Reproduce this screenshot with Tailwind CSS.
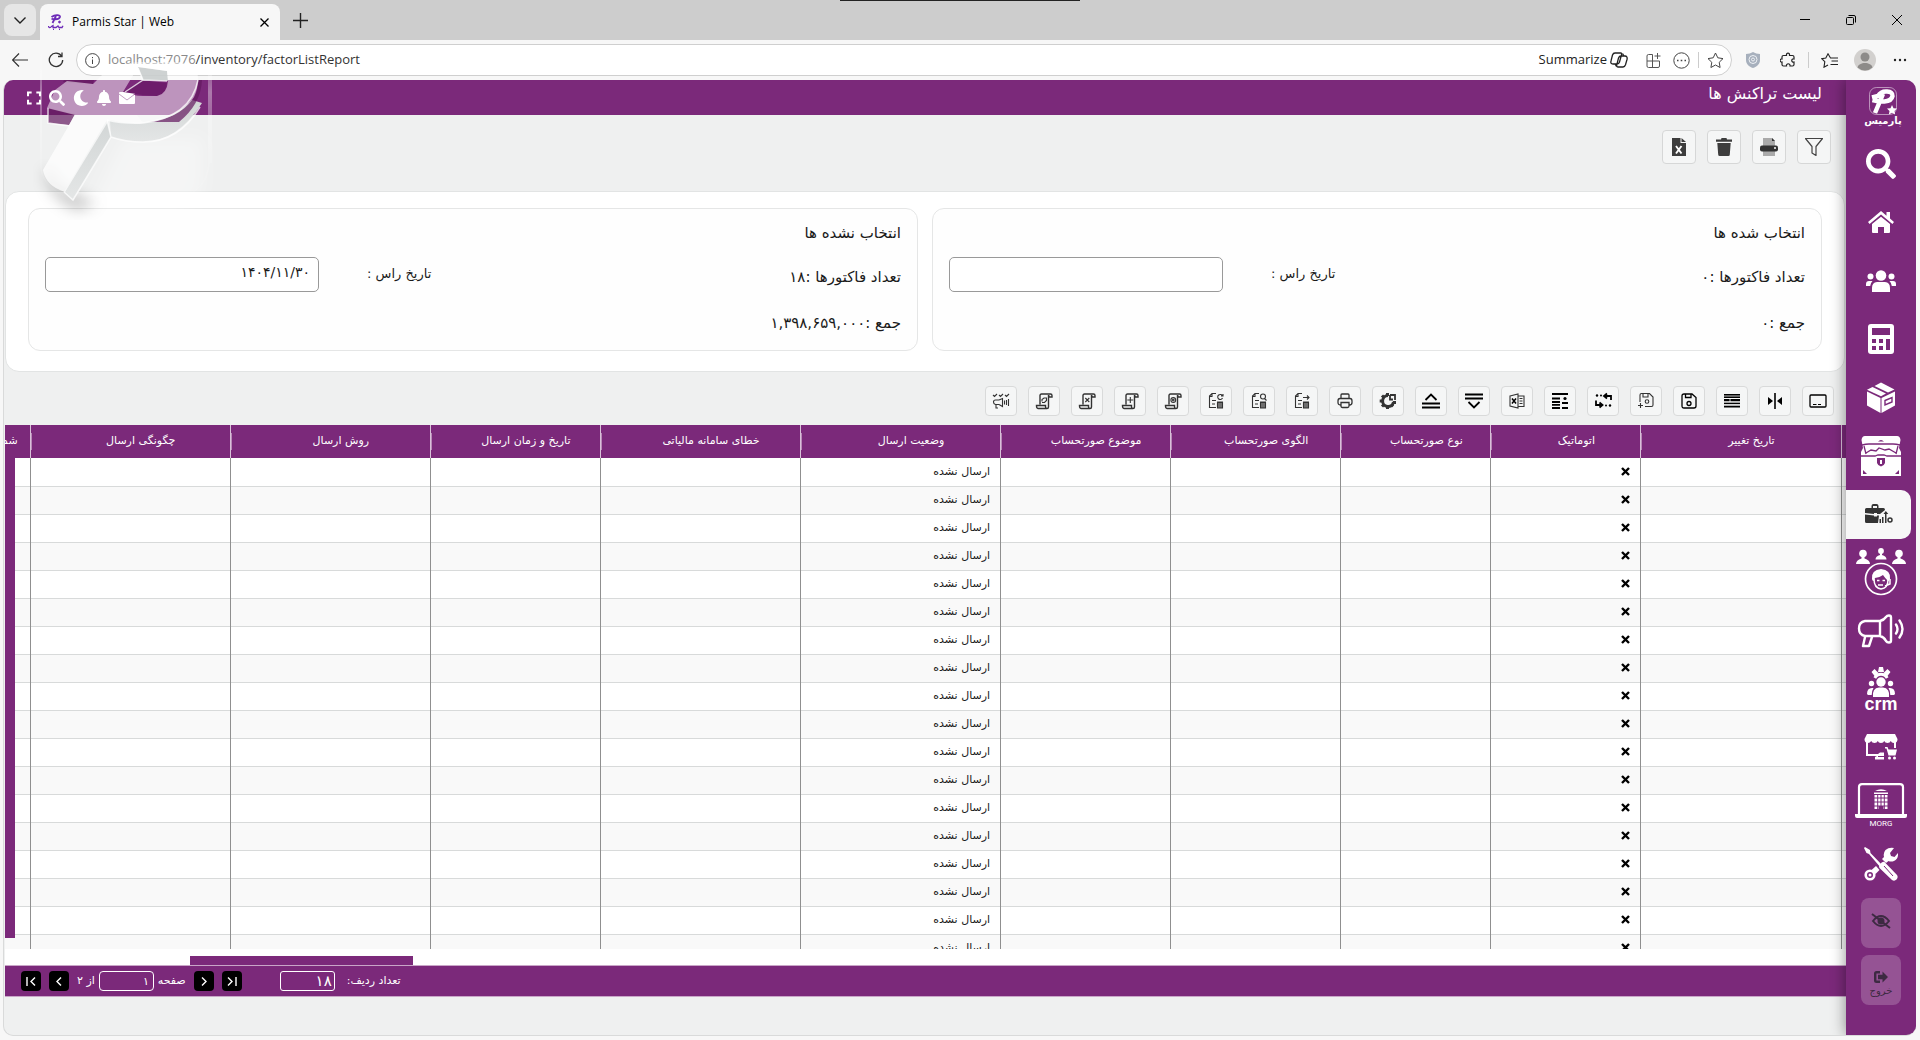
<!DOCTYPE html>
<html lang="fa">
<head>
<meta charset="utf-8">
<title>Parmis Star | Web</title>
<script src="https://cdn.jsdelivr.net/npm/@tailwindcss/browser@4"></script>
</head>
<body class="relative flex h-screen flex-col overflow-hidden bg-[#f7f7f7] font-['DejaVu_Sans',sans-serif] text-[#1a1a1a]">

<!-- Browser tab strip -->
<header class="flex h-10 shrink-0 items-end bg-[#cdcdcd] font-['Open_Sans',sans-serif]">
  <button aria-label="Tab actions" class="mb-1 ml-1 flex h-8 w-8 items-center justify-center rounded-lg bg-[#e6e6e6]">
    <svg class="h-3 w-3" viewBox="0 0 12 12" fill="none" stroke="#222" stroke-width="1.4"><path d="M0.5 3.5 6 9l5.5-5.500"/></svg>
  </button>
  <div class="ml-1 flex h-9 w-60 items-center rounded-t-lg bg-[#f7f7f7] pr-2 pl-2">
    <svg class="h-4 w-4" viewBox="0 0 16 16" fill="none" stroke="#6d2bb8"><path stroke-width="1.800" d="M3.500 3c4-3 9-2 8.500 0-.8 2.200-5 2.500-8.500 1.800M8 2 4.500 9"/><circle cx="11.500" cy="8" r=".9" fill="#6d2bb8"/><path stroke-width="1.300" d="M.5 12c0 2 2 2 3 .5l1.500-.8v1.800h3l2-1.500 1 1.500h3l1-1.800M5 15.300h1m5 0h1"/></svg>
    <span class="ml-2 flex-1 text-xs text-black">Parmis Star | Web</span>
    <button aria-label="Close tab" class="flex h-4 w-4 items-center justify-center"><svg class="h-[9px] w-[9px]" viewBox="0 0 9 9" stroke="#000" stroke-width="1.3"><path d="m.5.5 8 8m0-8-8 8"/></svg></button>
  </div>
  <button aria-label="New tab" class="mb-3 ml-3 flex h-4 w-4 items-center justify-center"><svg class="h-[15px] w-[15px]" viewBox="0 0 15 15" stroke="#222" stroke-width="1.400"><path d="M7.500 0v15M0 7.500h15"/></svg></button>
  <div class="flex h-10 flex-1 items-center justify-end gap-9 pr-[18px]">
    <button aria-label="Minimize"><svg class="h-[10px] w-[10px]" viewBox="0 0 10 10" stroke="#000"><path d="M0 4.500h10"/></svg></button>
    <button aria-label="Restore"><svg class="h-[10px] w-[10px]" viewBox="0 0 10 10" fill="none" stroke="#000"><rect x=".5" y="2.500" width="7" height="7" rx="1"/><path d="M2.500.5h5.500a1.500 1.500 0 0 1 1.500 1.500v5.500"/></svg></button>
    <button aria-label="Close"><svg class="h-[10px] w-[10px]" viewBox="0 0 10 10" stroke="#000"><path d="m0 0 10 10M10 0 0 10"/></svg></button>
  </div>
</header>
<div class="absolute top-0 left-1/2 h-px w-60 -translate-x-1/2 bg-[#222]"></div>

<!-- Address bar -->
<div class="flex h-10 shrink-0 items-center gap-3 bg-[#f7f7f7] pr-3 pl-3 font-['Open_Sans',sans-serif]">
  <button aria-label="Back" class="mr-2"><svg class="h-4 w-4" viewBox="0 0 16 16" fill="none" stroke="#333" stroke-width="1.200"><path d="M16 8H.5M7 1.500.5 8 7 14.500"/></svg></button>
  <button aria-label="Refresh"><svg class="h-4 w-4" viewBox="0 0 16 16" fill="none" stroke="#333" stroke-width="1.300"><path d="M13.500 4A6.700 6.700 0 1 0 14.700 8M14 .5V4.500h-4"/></svg></button>
  <div class="flex h-8 flex-1 items-center rounded-full border border-[#cfcfcf] bg-white pr-[7px] pl-2">
    <svg class="h-[15px] w-[15px]" viewBox="0 0 15 15" fill="none" stroke="#444"><circle cx="7.500" cy="7.500" r="6.900"/><path d="M7.500 6.500v4.500M7.500 4v1.200"/></svg>
    <div role="textbox" aria-label="Address" class="ml-2 flex-1 text-[13px] text-[#333]"><span class="text-[#8a8a8a]">localhost:7076</span>/inventory/factorListReport</div>
    <span class="text-[13px] text-[#222]">Summarize</span>
    <svg class="ml-[3px] h-[18px] w-[18px]" viewBox="0 0 18 18" fill="none" stroke="#222" stroke-width="1.300"><path d="M5 2h5.500c1.500 0 1.200 1.200.8 2.500L9.500 11c-.4 1.500-1 2-2.500 2H3c-2 0-2.500-1.200-2-3l1.500-6C3 2.600 3.700 2 5 2zM8 16h5c1.500 0 2-.8 2.500-2.200L17 8.500c.5-2-.2-3.500-2-3.500h-4C9.500 5 9 5.700 8.500 7L7 13c-.5 1.700-.5 3 1 3zM12.500 2.500 14 5M5 13l1.500 2.500"/></svg>
    <svg class="ml-[18px] h-[15px] w-[15px]" viewBox="0 0 15 15" fill="none" stroke="#555"><path d="M6.500 1.500h-4a1.500 1.500 0 0 0-1.500 1.500v10a1.500 1.500 0 0 0 1.500 1.500h9.500a1.500 1.500 0 0 0 1.500-1.500V8H1M6.500 1.500v13M11.500 0v6M8.500 3h6"/></svg>
    <svg class="ml-3 h-[17px] w-[17px]" viewBox="0 0 17 17" fill="none" stroke="#444"><circle cx="8.500" cy="8.500" r="7.700"/><path stroke-width="1.600" d="M4 8.500h1.500m2.200 0h1.600m2.200 0H13"/></svg>
    <span class="mx-2 h-4 w-px bg-[#ccc]"></span>
    <button aria-label="Favourite"><svg class="h-[17px] w-[17px]" viewBox="0 0 17 17" fill="none" stroke="#444" stroke-linejoin="round"><path d="m8.500 1 2.300 4.800 5.200.8-3.800 3.700.9 5.200-4.600-2.500-4.600 2.500.9-5.200L1 6.600l5.200-.8z"/></svg></button>
  </div>
  <svg class="ml-0.5 h-4 w-[14px]" viewBox="0 0 14 16"><path d="M7 0c2 1.300 4.500 2 7 2v6c0 4-3 6.800-7 8-4-1.200-7-4-7-8V2c2.500 0 5-.7 7-2z" fill="#a7b0bd"/><circle cx="7" cy="7.500" r="4" fill="none" stroke="#eef1f5"/><circle cx="7" cy="7.500" r="1.500" fill="none" stroke="#eef1f5"/></svg>
  <svg class="ml-2 h-4 w-4" viewBox="0 0 16 16" fill="none" stroke="#222" stroke-width="1.200"><path d="M3.500 3.500H6.500C6 .2 10 .2 9.500 3.500h3c1 0 1.500.5 1.500 1.500v2c-3-.5-3 3.500 0 3v2.500c0 1-.5 1.500-1.500 1.500H10c.5-3-4-3-3.500 0H3.500c-1 0-1.500-.5-1.500-1.500V10C-.5 10.500-.5 6.500 2 7V5c0-1 .5-1.500 1.500-1.500z"/></svg>
  <span class="h-4 w-px bg-[#ccc]"></span>
  <svg class="h-[15px] w-[17px]" viewBox="0 0 17 15" fill="none" stroke="#222" stroke-width="1.100"><path d="M13 5H9.500L7 .8 4.800 5 .8 5.700l3 3-.8 5.500 4-2.200M10.500 8H17M9.500 11.500H17M13 5h4"/></svg>
  <svg class="ml-1 h-[22px] w-[22px]" viewBox="0 0 22 22"><circle cx="11" cy="11" r="11" fill="#d2d0ce"/><circle cx="11" cy="8" r="4.500" fill="#8d8b89"/><path d="M3.500 18.500c1-6 14-6 15 0a11 11 0 0 1-15 0z" fill="#8d8b89"/></svg>
  <button aria-label="Settings and more" class="ml-1 w-4 shrink-0"><svg class="h-4 w-4" viewBox="0 0 16 16" fill="#222"><circle cx="3" cy="8" r="1.200"/><circle cx="8" cy="8" r="1.200"/><circle cx="13" cy="8" r="1.200"/></svg></button>
</div>

<!-- Application -->
<div dir="rtl" class="mr-1 mb-1 ml-[3px] flex min-h-0 flex-1 overflow-hidden rounded-[10px] border-b border-l border-[#d9dada] bg-[#eff0f0]">

  <aside class="relative z-10 flex w-[70px] shrink-0 flex-col bg-[#7b297a] text-white shadow-[0_0_14px_rgba(0,0,0,0.45)]">
    <a href="#" class="flex h-[55px] flex-col items-center pt-[7px] pl-1" aria-label="پارمیس">
      <svg class="h-7 w-7" viewBox="0 0 28 28" fill="none" stroke="#fff"><rect x=".5" y=".5" width="27" height="27" rx="7" stroke-width=".5"/><path stroke-width="4.500" d="M3 10.500l6-1.500q3-5 9-4.500 6 .5 5.500 4.500-1 5-8 5.500-5 .5-12-1.500M14 7 6 26"/><path fill="#fff" stroke="none" d="m23 18 1.500 3.200 3.500.4-2.500 2.400.6 3.500-3.100-1.700-3.100 1.700.6-3.500-2.500-2.400 3.500-.4z"/></svg>
      <span class="text-[10px] leading-3 font-bold">پارمیس</span>
    </a>
    <nav class="flex min-h-0 flex-1 flex-col">
      <a href="#" aria-label="جستجو" class="flex flex-1 items-center justify-center"><svg class="h-[30px] w-[30px]" viewBox="0 0 512 512" fill="#fff"><path d="M505 442.700L405.300 343c-4.500-4.500-10.600-7-17-7H372c27.600-35.300 44-79.700 44-128C416 93.100 322.900 0 208 0S0 93.100 0 208s93.100 208 208 208c48.300 0 92.700-16.400 128-44v16.300c0 6.400 2.500 12.500 7 17l99.700 99.700c9.400 9.400 24.600 9.400 33.900 0l28.300-28.300c9.400-9.400 9.400-24.600.1-34zM208 336c-70.700 0-128-57.200-128-128 0-70.700 57.200-128 128-128 70.700 0 128 57.200 128 128 0 70.700-57.200 128-128 128z"/></svg></a>
      <a href="#" aria-label="خانه" class="flex flex-1 items-center justify-center"><svg class="h-[22px] w-[26px]" viewBox="0 0 26 22" fill="#fff"><path d="M13 5.800 4 13V21q0 1 1 1h5v-6h6v6h5q1 0 1-1v-8z"/><path d="M13 0 0 11l1.600 2L13 3.600 24.400 13l1.600-2-4-3.400V1h-3.500v3.700z"/></svg></a>
      <a href="#" aria-label="اشخاص" class="flex flex-1 items-center justify-center"><svg class="h-[22px] w-[30px]" viewBox="0 0 30 22" fill="#fff"><circle cx="15" cy="5.500" r="5.300"/><circle cx="4.500" cy="6.500" r="3"/><circle cx="25.500" cy="6.500" r="3"/><path d="M6 22v-4q0-5.500 5-6h8q5 .5 5 6v4zM0 16v-2q0-3 3-3h3.500Q4.500 13 4.200 16zM30 16v-2q0-3-3-3h-3.500q2 2 2.300 5z"/></svg></a>
      <a href="#" aria-label="حسابداری" class="flex flex-1 items-center justify-center"><svg class="h-[30px] w-[26px]" viewBox="0 0 26 30"><rect width="26" height="30" rx="3" fill="#fff"/><path fill="#7b297a" d="M4 4h18v7H4zM4 15h4v4H4zm7 0h4v4h-4zm-7 7h4v4H4zm7 0h4v4h-4zm7-7h4v11h-4z"/></svg></a>
      <a href="#" aria-label="انبار" class="flex flex-1 items-center justify-center"><svg class="h-[31px] w-[28px]" viewBox="0 0 28 31" fill="#fff"><path d="M0 9.500 13.500 16v15L0 23.500zM28 9.500 14.500 16v15L28 23.500zM0 7.800 5.500 5 19 11.500l-5 2.700zM7.500 4 14 .5l13.500 7L21 10.500z"/><path d="m18 18.500 7-3v4.500l-7 3z" stroke="#7b297a" stroke-width="1.400"/></svg></a>
      <a href="#" aria-label="خزانه" class="flex flex-1 items-center justify-center"><svg class="h-10 w-10" viewBox="0 0 40 40"><path fill="#fff" d="M4 0h32q3 0 3.500 4L38 12l2 4v24H0V16l2-4L.5 4Q1 0 4 0z"/><path fill="none" stroke="#7b297a" stroke-width="1.300" d="M1 9q4-1 7-1h24q3 0 7 1M3 10l2 8M37 10l-2 8M5 17l5-3 5 1 3-3 6 2 4-1 7 4M0 20h14l3-1h6l3 1h14"/><path fill="#7b297a" d="M17 5.500q3-3 6 0zM16 22h8v5q-1 3-4 3.500-3-.5-4-3.500zM2 34l4 4H2zM38 34l-4 4h4z"/><path fill="#fff" d="M19 24h2v4h-2z"/></svg></a>
      <a href="#" aria-label="فاکتورها" aria-current="page" class="flex flex-1 items-center justify-end"><span class="flex h-[49px] w-[65px] items-center justify-center rounded-r-[10px] bg-[#f7f7f7]"><svg class="h-5 w-7" viewBox="0 0 28 20" fill="#333"><path d="M1.500 4h5V2q0-2 2-2h3q2 0 2 2v2h5q1.500 0 1.500 2L15 10h-3V9H9v1L0 9V5.500Q0 4 1.500 4zM8 4h4V2H8z"/><path d="m0 10.500 9 1v1h3v-1h2l-1 7.500H1.500Q0 19 0 17.500zM14.500 15H16v4h-1.500zM17 13h1.500v6H17zM20 9h1.500v10H20zM18.500 10l2.300-3 2.500 3z"/><circle cx="25" cy="16" r="2" fill="none" stroke="#333" stroke-width="1.500"/></svg></span></a>
      <a href="#" aria-label="پشتیبانی" class="flex flex-1 items-center justify-center"><svg class="h-12 w-[50px]" viewBox="0 0 50 48" fill="#fff"><circle cx="7" cy="5.500" r="3.800"/><path d="M0 16q0-4 5.500-5.500V8h3v2.500q5.500 1.500 5.500 5.500z"/><circle cx="25" cy="3" r="2.900"/><path d="M19.500 11.500q0-3.500 4.500-4.500V5h2v2q4.500 1 4.500 4.500z"/><circle cx="43" cy="5.500" r="3.800"/><path d="M36 16q0-4 5.500-5.500V8h3v2.500q5.500 1.500 5.500 5.500z"/><circle cx="25" cy="31" r="15.500" fill="none" stroke="#fff" stroke-width="1.700"/><path d="M16 31q-1-9 9-10 10 1 9 10-1 2-2 2-3-3-5-6-4 3-8 3l-1 3q-2 0-2-2z"/><path fill="none" stroke="#fff" stroke-width="1.500" d="M18 31q0 9 7 10 7-1 7-9M34 31v5l-5 2"/><path stroke="#fff" stroke-width="1.500" d="M21 32.500h2.500m3 0H29M22 37h5"/></svg></a>
      <a href="#" aria-label="اطلاع رسانی" class="flex flex-1 items-center justify-center"><svg class="h-[34px] w-12" viewBox="0 0 48 34" fill="none" stroke="#fff" stroke-width="2.600" stroke-linejoin="round" stroke-linecap="round"><path d="M23 7H8Q2 8 2 14.500T8 22h15M23 7v15M23 7q4-1 6-4 1-1.500 3-1.500 2 0 2 2v23q0 2-2 2t-3-1.500q-2-4-6-5M8 23 6 32h6l3-9M39 10.500q3 4.500 0 9M42.500 6.500q6 8.500 0 17" stroke-width="2.400"/></svg></a>
      <a href="#" aria-label="crm" class="flex flex-1 flex-col items-center justify-center"><svg class="h-[30px] w-7" viewBox="0 0 28 30" fill="#fff"><path fill="none" stroke="#fff" stroke-width="3" d="M7.800 11a7 7 0 0 1 12.400 0"/><path d="M12 0h4l1 5h-6zM4.500 5 7.500 2l4 4-3.500 3.500zM23.500 5l-3-3-4 4 3.500 3.500z"/><circle cx="14" cy="15" r="4.700"/><circle cx="4.500" cy="16.500" r="2.700"/><circle cx="23.500" cy="16.500" r="2.700"/><path d="M6 30q-1-9 6-9.500h4q7 .5 6 9.500zM0 27q0-6 5-6h1.500Q5 23 4.700 28H1zM28 27q0-6-5-6h-1.500q1.500 2 1.800 7H27z"/></svg><span dir="ltr" class="font-['Liberation_Sans',sans-serif] text-[18px] leading-[14px] font-bold">crm</span></a>
      <a href="#" aria-label="فروشگاه" class="flex flex-1 items-center justify-center"><svg class="h-[26px] w-[34px]" viewBox="0 0 34 26" fill="#fff"><path d="M3 0h28l2.500 5q0 4-3.500 4-2.500 0-3.200-2Q26 9 23.500 9t-3.300-2Q19.500 9 17 9t-3.200-2Q13 9 10.500 9T7.200 7Q6 9 4 9 .5 9 .5 5z"/><path d="M2 8h2v12h10l2-1.500h4V22h-6v1h6v2.500h-9V23l2-1H2zM30 8h2v6h-2zM21 13h2.500l1 2.500H33l-1.500 6h-7l-2-7H21z"/><circle cx="25.500" cy="24" r="1.500"/><circle cx="30.500" cy="24" r="1.500"/></svg></a>
      <a href="#" aria-label="MORG" class="flex flex-1 flex-col items-center justify-center"><svg class="h-[35px] w-[52px]" viewBox="0 0 52 35" fill="#fff"><path fill="none" stroke="#fff" stroke-width="2.200" d="M4 31V4Q4 1.200 7 1.200h38Q48 1.200 48 4v27"/><path d="M0 31h52v2q0 2-2 2H2q-2 0-2-2zM20 8q6-3.500 12 0zM19 9.500h14v1.500H19zM19.500 12h13v14h-4v-3h-5v3h-4z"/><path stroke="#7b297a" stroke-width="1" d="M19 15h14M19 19h14M19 23h14M22.700 12v14M26 12v11M29.300 12v14"/></svg><span dir="ltr" class="mt-px font-['Roboto',sans-serif] text-[8px] leading-[9px]">MORG</span></a>
      <a href="#" aria-label="ابزار" class="flex flex-1 items-center justify-center"><svg class="h-[34px] w-[34px]" viewBox="0 0 34 34" fill="#fff"><path d="M0 1 1 0l5 3 .5 3L19 19l-2 2L5 7 2.500 6z"/><path d="M16 17.500q2-3.500 4.500-2.500L33 28q1.500 2.500-.5 4.500t-4.500.5L15.500 21q-1-2 .5-3.500z"/><path d="M30 1l-4 5 1 3 3.500 1L34 6q.5 6-4 8-3 1-5.500 0L22 16l-4-4 2-2q-1-4 1.500-7Q25 0 30 1zM12 19l3.500 4-4 4-4-4z"/><circle cx="6" cy="28" r="4.300" fill="none" stroke="#fff" stroke-width="2.600"/><circle cx="6" cy="28" r="1.500"/><path stroke="#7b297a" stroke-width="1" d="m20 19 9 10"/></svg></a>
    </nav>
    <div class="flex h-[142px] shrink-0 flex-col items-center gap-[7px] pt-[5px]">
      <button aria-label="پنهان کردن" class="flex h-[50px] w-10 items-center justify-center rounded-lg bg-white/20"><svg class="mb-1 h-4 w-5" viewBox="0 0 20 16" fill="none" stroke="#3d2a42" stroke-width="2"><path d="M2 8q8-10 16 0-8 10-16 0z"/><circle cx="10" cy="8" r="2.500" fill="#3d2a42"/><path d="m1 1 18 14"/></svg></button>
      <button class="flex h-[50px] w-10 flex-col items-center justify-end rounded-lg bg-white/20 pb-1.5 text-[10px] leading-4 text-[#3d2a42]"><svg class="h-3 w-[14px]" viewBox="0 0 14 12" fill="none" stroke="#3d2a42" stroke-width="2.400"><path d="M6 1.200H2.500Q1.200 1.200 1.200 2.500v7q0 1.300 1.300 1.300H6"/><path fill="#3d2a42" stroke="none" d="M4 3.800h4.500V.5L14 6l-5.500 5.500V8.200H4z"/></svg>خروج</button>
    </div>
  </aside>

  <main class="flex min-w-0 flex-1 flex-col">
    <div class="flex h-[35px] shrink-0 justify-between bg-[#7b297a] pr-6 pl-[23px]">
      <h1 class="pt-0.5 text-base leading-6 font-medium text-white">لیست تراکنش ها</h1>
      <div dir="ltr" class="flex items-center gap-2">
        <button aria-label="تمام صفحه"><svg class="h-[14px] w-[14px]" viewBox="0 0 15 14" fill="none" stroke="#fff" stroke-width="2.200"><path d="M1.100 5V1.100H5M10 1.100h3.900V5M13.900 9v3.900H10M5 12.900H1.100V9"/></svg></button>
        <button aria-label="جستجو"><svg class="h-4 w-4" viewBox="0 0 512 512" fill="#fff"><path d="M505 442.700L405.300 343c-4.500-4.500-10.600-7-17-7H372c27.600-35.300 44-79.700 44-128C416 93.100 322.900 0 208 0S0 93.100 0 208s93.100 208 208 208c48.300 0 92.700-16.400 128-44v16.300c0 6.400 2.500 12.500 7 17l99.700 99.700c9.400 9.400 24.600 9.400 33.900 0l28.300-28.300c9.400-9.400 9.400-24.600.1-34zM208 336c-70.700 0-128-57.200-128-128 0-70.700 57.200-128 128-128 70.700 0 128 57.200 128 128 0 70.700-57.200 128-128 128z"/></svg></button>
        <button aria-label="حالت شب"><svg class="h-4 w-4" viewBox="0 0 512 512" fill="#fff"><path d="M283.200 512c79 0 151-36 198.900-94.800 7-8.700-.6-21.400-11.600-19.300-124.200 23.600-238.300-71.600-238.300-197 0-72.200 38.700-138.600 101.500-174.400 9.700-5.500 7.300-20.200-3.700-22.200A258 258 0 0 0 283.200 0c-141.300 0-256 114.500-256 256 0 141.300 114.500 256 256 256z"/></svg></button>
        <button aria-label="اعلان ها"><svg class="h-4 w-[14px]" viewBox="0 0 448 512" fill="#fff"><path d="M224 512c35.300 0 64-28.600 64-64H160c0 35.400 28.700 64 64 64zm215.400-149.700c-19.300-20.800-55.500-52-55.500-154.300 0-77.700-54.500-139.900-127.900-155.200V32c0-17.700-14.300-32-32-32s-32 14.300-32 32v20.800C118.600 68.100 64.100 130.300 64.100 208c0 102.300-36.200 133.500-55.500 154.300-6 6.400-8.700 14.200-8.600 21.700.1 16.400 13 32 32.100 32h383.800c19.100 0 32-15.600 32.100-32 0-7.500-2.600-15.300-8.600-21.700z"/></svg></button>
        <button aria-label="پیام ها"><svg class="h-3 w-4" viewBox="0 0 16 12" fill="#fff"><rect width="16" height="12" rx="1"/><path fill="none" stroke="#7b297a" stroke-width=".9" d="m0 2 8 6 8-6"/></svg></button>
      </div>
    </div>

    <div class="flex h-[76px] shrink-0 gap-[11px] pt-[15px] pr-[15px]">
      <button aria-label="فیلتر" class="flex h-[34px] w-[34px] items-center justify-center rounded border border-[#d6d7d7] bg-[#f5f6f6]"><svg class="h-[18px] w-[18px]" viewBox="0 0 18 18" fill="none" stroke="#444" stroke-linejoin="round" stroke-width="1.200"><path d="M.5.5h17L11 8.500v9l-4-2.500V8.500z"/></svg></button>
      <button aria-label="چاپ" class="flex h-[34px] w-[34px] items-center justify-center rounded border border-[#d6d7d7] bg-[#f5f6f6]"><svg class="h-[18px] w-[18px]" viewBox="0 0 18 18"><path fill="#aaa" d="M3 0h9l3 3v15H3z"/><path fill="#333" d="M12 0l3 3h-3z"/><rect y="7.500" width="18" height="6" rx="2" fill="#333"/><circle cx="15" cy="10" r="1" fill="#fff"/></svg></button>
      <button aria-label="حذف" class="flex h-[34px] w-[34px] items-center justify-center rounded border border-[#d6d7d7] bg-[#f5f6f6]"><svg class="h-[18px] w-4" viewBox="0 0 16 18" fill="#3d3d3d"><path d="M5.500 0h5L11 1.500h5v2.300H0V1.500h5zM1.300 5h13.400l-.9 11.500q0 1.500-1.500 1.500H3.700q-1.500 0-1.500-1.500z"/></svg></button>
      <button aria-label="خروجی اکسل" class="flex h-[34px] w-[34px] items-center justify-center rounded border border-[#d6d7d7] bg-[#f5f6f6]"><svg class="h-[18px] w-[14px]" viewBox="0 0 14 18"><path fill="#3d3d3d" d="M0 0h8.500v5H14v13H0zM9.500 0 14 4H9.500z"/><path stroke="#fff" stroke-width="1.900" d="m4 8 5.500 7.500m0-7.500L4 15.500"/></svg></button>
    </div>

    <section class="mr-px ml-px grid h-[181px] shrink-0 grid-cols-2 gap-[14px] rounded-[14px] border border-[#e2e4e4] bg-white px-[22px] pt-4 pb-5 text-[15px]">
      <div class="flex justify-between rounded-xl border border-[#e5e6e6] bg-[#fefefe] px-4 pt-3">
        <div class="flex flex-col">
          <h2 class="leading-6">انتخاب شده ها</h2>
          <p class="mt-5 leading-6">تعداد فاکتورها :۰</p>
          <p class="mt-[22px] leading-6">جمع :۰</p>
        </div>
        <div class="mt-[35px] flex h-9 items-center gap-12">
          <label for="r1" class="text-[13px]">تاریخ راس :</label>
          <input id="r1" class="h-[35px] w-[274px] rounded-[5px] border border-[#999] bg-white px-2 pb-1 text-sm">
        </div>
      </div>
      <div class="flex justify-between rounded-xl border border-[#e5e6e6] bg-[#fefefe] px-4 pt-3">
        <div class="flex flex-col">
          <h2 class="leading-6">انتخاب نشده ها</h2>
          <p class="mt-5 leading-6">تعداد فاکتورها :۱۸</p>
          <p class="mt-[22px] leading-6">جمع :۱,۳۹۸,۶۵۹,۰۰۰</p>
        </div>
        <div class="mt-[35px] flex h-9 items-center gap-12">
          <label for="r2" class="text-[13px]">تاریخ راس :</label>
          <input id="r2" value="۱۴۰۴/۱۱/۳۰" class="h-[35px] w-[274px] rounded-[5px] border border-[#999] bg-white px-2 pb-1 text-sm">
        </div>
      </div>
    </section>

    <div id="tools" class="flex h-[53px] shrink-0 items-center gap-[11px] pt-1 pr-3"></div>

    <!-- Grid -->
    <div class="relative ml-px min-h-0 flex-1 overflow-hidden bg-white">
      <table class="w-full table-fixed border-collapse">
        <colgroup id="cols"></colgroup>
        <thead><tr id="head" class="h-[33px] bg-[#7b297a] text-[11px] whitespace-nowrap text-white"></tr></thead>
        <tbody id="rows" class="text-[11px]"></tbody>
      </table>
      <div class="absolute top-[33px] bottom-[11px] left-0 w-2.5 bg-[#7b297a]"></div>
    </div>
    <div class="ml-px flex h-4 shrink-0 items-end bg-white" dir="ltr"><div class="ml-[185px] h-[9px] w-[223px] bg-[#7b297a]"></div></div>

    <footer class="ml-px flex h-8 shrink-0 items-center justify-end border-y border-[#c9a6c8] bg-[#7b297a] pl-4 text-[11px] text-white">
      <label for="count">تعداد ردیف:</label>
      <input id="count" value="۱۸" class="mr-3 h-5 w-[55px] rounded-[3px] border border-white px-0.5 text-[15px]">
      <div class="mr-[38px] flex items-center">
        <button aria-label="آخر" class="flex h-5 w-5 items-center justify-center rounded-sm bg-black"><svg class="h-[9px] w-[10px]" viewBox="0 0 10 9" fill="none" stroke="#fff" stroke-width="1.400"><path d="m1 .5 4 4-4 4M9 0v9"/></svg></button>
        <button aria-label="بعدی" class="mr-2 flex h-5 w-5 items-center justify-center rounded-sm bg-black"><svg class="h-[9px] w-[6px]" viewBox="0 0 6 9" fill="none" stroke="#fff" stroke-width="1.400"><path d="m1 .5 4 4-4 4"/></svg></button>
        <label for="pg" class="mr-2">صفحه</label>
        <input id="pg" value="۱" class="mr-1 h-5 w-[55px] rounded border border-white px-1">
        <span class="mr-1">از ۲</span>
        <button aria-label="قبلی" class="mr-2 flex h-5 w-5 items-center justify-center rounded-sm bg-black"><svg class="h-[9px] w-[6px]" viewBox="0 0 6 9" fill="none" stroke="#fff" stroke-width="1.400"><path d="m5 .5-4 4 4 4"/></svg></button>
        <button aria-label="اول" class="mr-2 flex h-5 w-5 items-center justify-center rounded-sm bg-black"><svg class="h-[9px] w-[10px]" viewBox="0 0 10 9" fill="none" stroke="#fff" stroke-width="1.400"><path d="M1 0v9M9 .5l-4 4 4 4"/></svg></button>
      </div>
    </footer>
    <div class="h-[38px] shrink-0"></div>
  </main>
</div>

<!-- Translucent floating logo -->
<svg class="pointer-events-none absolute top-7 left-7 h-52 w-52" viewBox="0 0 208 208" fill="none">
  <defs>
    <filter id="soft" x="-20%" y="-20%" width="140%" height="140%"><feGaussianBlur stdDeviation="7"/></filter>
    <filter id="glow" x="-20%" y="-20%" width="140%" height="140%"><feGaussianBlur stdDeviation="8"/></filter>
    <linearGradient id="edge" x1="0" y1="0" x2="0" y2="1"><stop offset="0" stop-color="#fff" stop-opacity="0"/><stop offset=".3" stop-color="#fff" stop-opacity=".5"/><stop offset="1" stop-color="#fff" stop-opacity="0"/></linearGradient>
    <linearGradient id="side" x1="0" y1="0" x2="0" y2="1"><stop offset="0" stop-color="#d2d6d6"/><stop offset="1" stop-color="#e4e6e6"/></linearGradient>
  </defs>
  <path filter="url(#soft)" fill="#000" fill-opacity=".2" d="M16 145q6 28 34 38l20-8-26-12Q26 160 22 140z"/>
  <path filter="url(#glow)" fill="#fff" fill-opacity=".35" d="M95 110h80v50q-10 20-30 22H60z"/>
  <path stroke="url(#edge)" stroke-width="1.500" d="M13 18v122q2 20 31 32M181 25v110q-2 30-34 36h-90M183 25v110"/>
  <path fill="url(#side)" d="M79 92l4 17-38 63-9-8z"/>
  <path fill="url(#side)" d="M82 92q16 4 33 3 32-5 49-23l10 3q-24 38-59 39-18 0-32-5z"/>
  <path fill="#64185f" fill-opacity=".7" d="M20 80l27 6-6 11-21-2zM36 52h30l-1 4-30-2zM164 72q7-9 6-20l4 0q-1 24-23 42h-30q30-4 43-22z"/>
  <path fill="#c9cdcd" fill-opacity=".9" d="m110 39 29 4 1 10-25-1z"/>
  <path fill="#6d1c6b" d="m114 52 25 3q-2 13-10 13l-14-1-20-3z"/>
  <path fill="#fff" fill-opacity=".5" fill-rule="evenodd" d="M39 53l26 3 10-10q18-12 38-12h40q18 4 17 18-1 14-6 20-17 19-49 23-18 1-34-3l-44 72Q18 158 15 142l32-55-28-7 8-18zM110 39 95 64q10 4 20 4h14q10-2 11-15l-1-10z"/>
  <path fill="#fff" fill-opacity=".45" d="M47 87h62l6 8q-17 1-34-3l-44 72Q18 158 15 142z"/>
  <path stroke="#fff" stroke-opacity=".75" stroke-width="1.500" d="M20 80v15l22 3M79 92l4 17-38 63-9-8M83 109q14 5 32 5 36 0 57-35M110 40l5 12-18 12M115 52l24 1M79 92q16 4 36 3 48-6 55-43"/>
</svg>

<script>
const dark = 'fill="none" stroke="#333" stroke-width="1.1"';
const bold = 'fill="none" stroke="#000" stroke-width="1.8"';
const scroll = '<path stroke-width="1.400" d="M4 11.500V2.500Q4 1 5.500 1h9Q16 1 16 2.500V4h-3V2.500M12.500 2v12q0 1.500-1.500 1.500H2Q.5 15.500.5 12.500H9.500V14q0 1.500 1.500 1.500"/>';
const doc = '<path d="M8 .5H4L1.500 3V14.500H8M4 1v2.500H1.500M4 7.500h4M4 11h3"/><path fill="#333" d="M9.500 9.500h5V15h-5zM9 9h6"/><path stroke="#fff" stroke-width=".6" d="M11 10v4.500m2-4.500v4.500"/>';
const tools = [
  ['نمایش', `<g ${dark}><rect x="0" y="2" width="16" height="12" rx="1" stroke="#000" stroke-width="1.300"/><path stroke="#000" d="M3 11.500h3.500m1.500 0h3"/></g>`],
  ['تنظیم عرض', '<path d="M8 0v16" stroke="#000" stroke-width="1.600"/><path d="M1 4l5 4-5 4zM15 4l-5 4 5 4z"/>'],
  ['ردیف ها', '<path d="M0 1h16v4H0zM0 9.500h16v1.800H0zM0 12.500h16v2H0zM0 6h16v2.500H0z"/><path stroke="#fff" stroke-width=".8" d="M0 5.500h16M0 8.900h16M0 12h16M6 5.500v3.500M0 3h16"/>'],
  ['ذخیره', `<g ${dark}><path stroke="#000" stroke-width="1.300" d="M3 1h8l4 3.500V13q0 2-2 2H3q-2 0-2-2V3q0-2 2-2zM4.500 1v3.500h5.500V1"/><circle cx="8" cy="10.500" r="2" stroke="#000" stroke-width="1.300"/></g>`],
  ['ذخیره جدید', `<g ${dark}><path d="M2 9V2q0-1.500 1.500-1.500h8L15 4v8q0 1.500-1.500 1.500H7M5 .5v3.500h5V.5M0 12.500h5M2.500 10v5"/><circle cx="9" cy="8.500" r="1.800"/></g>`],
  ['جابجایی', `<g ${bold}><path d="M9 3h7v4M7 12H1V7.500M12 .5 9 3l3 2.500M4.500 9.500 7.500 12l-3 2.500"/></g><circle cx="2" cy="2.500" r="1.200"/><circle cx="6" cy="2.500" r="1"/><circle cx="15" cy="12.500" r="1.200"/><circle cx="11" cy="12.500" r="1"/>`],
  ['ستون ها', '<path d="M0 0h16v2H0zM0 4.500h8v2H0zM0 8h8v2H0zM0 11h8v1.700H0zM0 14h8v2H0zM10 9h6v2h-6zM10 14h6v2h-6z"/><circle cx="13" cy="5.500" r="1.600"/>'],
  ['اکسل', `<g ${dark}><path d="M1 3l8-2v14l-8-2zM9 3h6v10.500H9M10.500 5.500h3m-3 2.500h3m-3 2.500h3"/><path stroke="#000" stroke-width="1.500" d="m3 5.500 4 5m0-5-4 5"/></g>`],
  ['باز کردن', `<g ${bold}><path d="M-1 1.500h18M-1 5.500h18M2.500 9 8 14.500 13.500 9"/></g>`],
  ['بستن', `<g ${bold}><path d="M-1 10.500h18M-1 14.500h18M2.500 7 8 1.500 13.500 7"/></g>`],
  ['تنظیمات', '<path fill="none" stroke="#333" stroke-width="3" d="M8 2.500a5.500 5.500 0 1 0 5.500 6.500"/><path stroke="#333" stroke-width="3" d="M7.500 0v3M7.500 13v3M-.3 8H3M2 2.500l2 2M2 13.500l2-2M11 11.500l2 2M13 9.500h3"/><path fill="none" stroke="#333" stroke-width="1.800" d="M10 2h5v5M10 2v4.500h3"/>'],
  ['چاپ', `<g ${dark}><path stroke-width="1.300" d="M4 5V2q0-1 1-1h6q1 0 1 1v3M3.500 12Q1 12 1 9.500V8q0-2.500 2-2.500h10q2 0 2 2.500v1.500q0 2.500-2.500 2.500M4 9.500h8V13q0 1.500-1.500 1.500h-5Q4 14.500 4 13z"/></g>`],
  ['سند ارسال', `<g ${dark}>${doc}<path d="M9 4.500h6M13 2.500l2 2-2 2"/></g>`],
  ['سند جستجو', `<g ${dark}>${doc}<circle cx="12" cy="3.500" r="2.500"/><path d="m13.500 5.500 2 2"/></g>`],
  ['سند تازه سازی', `<g ${dark}>${doc}<path d="M14.500 3a2.500 2.500 0 1 0 0 2M15 1v2h-2"/></g>`],
  ['صورتحساب', `<g ${dark}>${scroll}<circle cx="8.300" cy="7" r="2.400"/><circle cx="8.300" cy="7" r=".8"/></g>`],
  ['افزودن', `<g ${dark}>${scroll}<path d="M8.300 4v6m-3-3h6"/></g>`],
  ['ابطال', `<g ${dark}>${scroll}<path d="m6.300 5 4 4m0-4-4 4"/></g>`],
  ['اصلاح', `<g ${dark}>${scroll}<path d="M6 8.500V6.500L8 5h2.500v2.500L8.500 9.500H6"/></g>`],
  ['اعلام', `<g ${dark}><path d="m0 2 1.500 1.500L4 1m2 1 1.500 1.500L10 1m2 1 1.500 1.500L16 1M6 7H2.500Q.5 7 .5 9t2 2.500H6M6 7l3.500-1.500v8L6 11.500M3 12v3h2M11.500 7.500v4M13.500 7v5M15.500 6v7"/></g>`],
];
document.getElementById('tools').innerHTML = tools.map(([name, art]) =>
  `<button aria-label="${name}" class="flex h-[30px] w-8 items-center justify-center rounded border border-[#d9dada] bg-[#f5f6f6]"><svg class="h-4 w-4 overflow-visible" viewBox="0 0 16 16">${art}</svg></button>`).join('');

const columns = [['', 5], ['تاریخ تغییر', 200], ['اتوماتیک', 150], ['نوع صورتحساب', 150], ['الگوی صورتحساب', 170], ['موضوع صورتحساب', 170], ['وضعیت ارسال', 200], ['خطای سامانه مالیاتی', 200], ['تاریخ و زمان ارسال', 170], ['روش ارسال', 200], ['چگونگی ارسال', 200], ['شماره', 25]];
document.getElementById('cols').innerHTML = columns.map(([, w]) => `<col style="width:${w / 18.4}%">`).join('');
document.getElementById('head').innerHTML = columns.map(([t], i) =>
  `<th scope="col" class="overflow-hidden border-l border-[#d9c0d9] p-0 font-normal last:border-l-0"><div class="${i === 11 ? 'pr-3 text-right' : i ? 'border-l border-[#b98bb8] pl-5 text-center' : ''}">${t}</div></th>`).join('');
const cross = '<svg aria-label="خیر" class="inline h-[9px] w-[9px] align-middle" viewBox="0 0 9 9" stroke="#000" stroke-width="2.400"><path d="m1 1 7 7m0-7-7 7"/></svg>';
document.getElementById('rows').innerHTML = Array.from({ length: 18 }, () =>
  '<tr class="h-7 border-b border-[#d8dada] bg-white even:bg-[#f9f9f9]">' + columns.map((c, i) =>
    `<td class="border-l border-[#8f8f8f] p-0 last:border-l-0 ${i ? 'pr-2.5' : ''}">${i === 2 ? cross : i === 6 ? 'ارسال نشده' : ''}</td>`).join('') + '</tr>').join('');
</script>
</body>
</html>
